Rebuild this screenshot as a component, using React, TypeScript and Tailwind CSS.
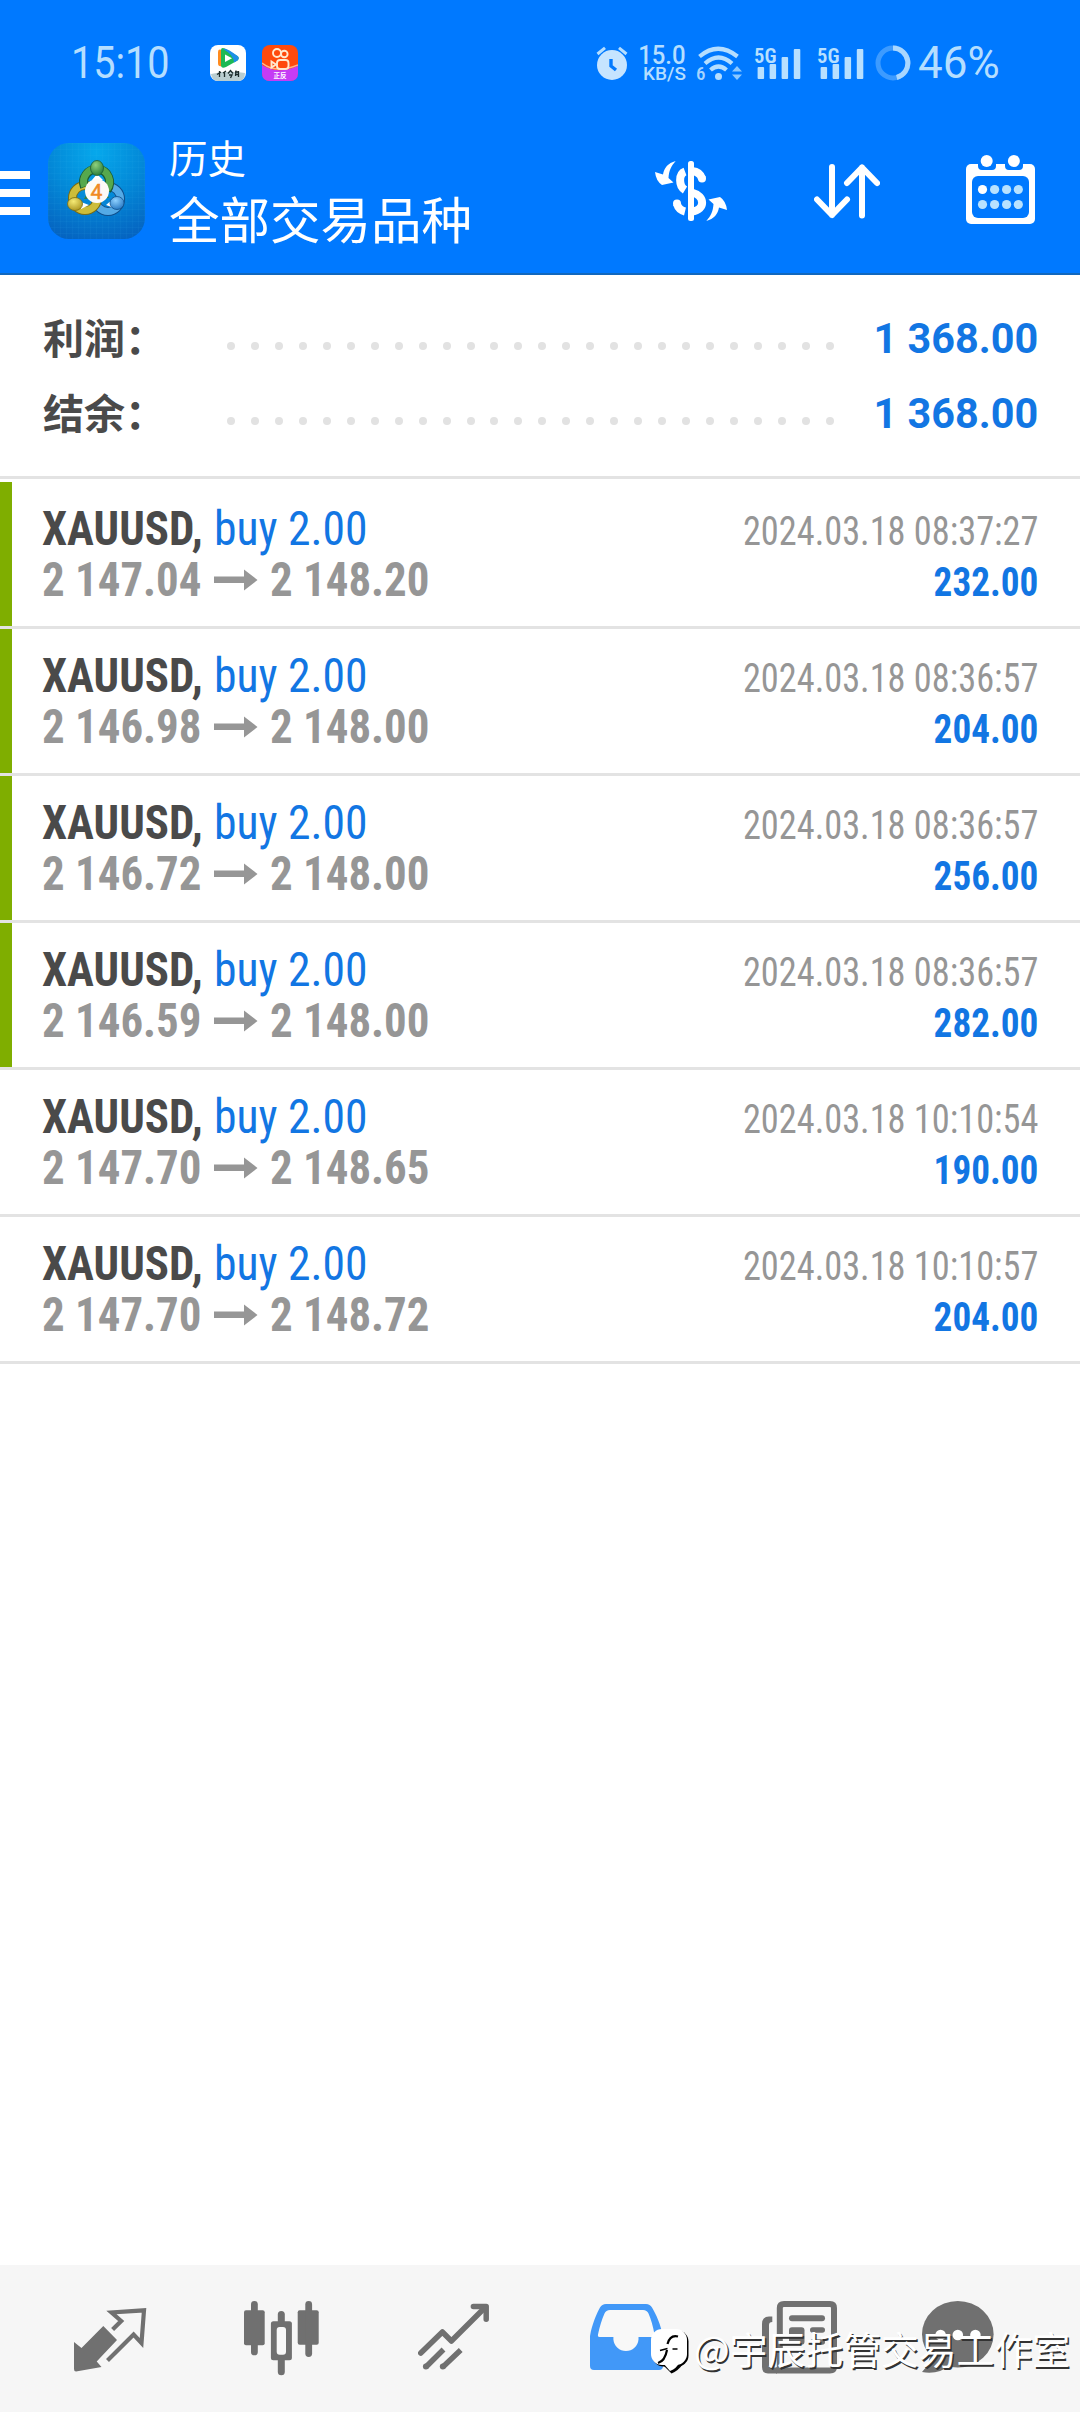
import type { ReactNode } from 'react';
import { cva } from 'class-variance-authority';
import clsx from 'clsx';

interface Deal {
  open: string;
  close: string;
  time: string;
  profit: string;
  marked: boolean;
}

const DEALS: Deal[] = [
  { open: '2 147.04', close: '2 148.20', time: '2024.03.18 08:37:27', profit: '232.00', marked: true },
  { open: '2 146.98', close: '2 148.00', time: '2024.03.18 08:36:57', profit: '204.00', marked: true },
  { open: '2 146.72', close: '2 148.00', time: '2024.03.18 08:36:57', profit: '256.00', marked: true },
  { open: '2 146.59', close: '2 148.00', time: '2024.03.18 08:36:57', profit: '282.00', marked: true },
  { open: '2 147.70', close: '2 148.65', time: '2024.03.18 10:10:54', profit: '190.00', marked: false },
  { open: '2 147.70', close: '2 148.72', time: '2024.03.18 10:10:57', profit: '204.00', marked: false },
];

const SUMMARY = [
  { label: '利润：', value: '1 368.00' },
  { label: '结余：', value: '1 368.00' },
];

const condensed = cva("block whitespace-nowrap font-['Roboto_Condensed',Roboto,sans-serif]", {
  variants: {
    fit: {
      left: 'origin-left scale-x-[0.935]',
      volume: 'origin-left scale-x-[0.95]',
      time: 'origin-right scale-x-[0.908]',
      profit: 'origin-right scale-x-[0.93]',
    },
  },
});

/* ---------- status bar ---------- */

function VideoAppIcon() {
  return (
    <svg width="36" height="36" viewBox="0 0 36 36">
      <rect width="36" height="36" rx="8" fill="#fff" />
      <path d="M1 29 Q18 25 35 28 Q35 36 28 36 H8 Q2 36 1 29Z" fill="#b9cdd0" />
      <path d="M8 7 Q8 3.500 12 5 V21 Q8 22 8 18Z" fill="#ff8a1e" />
      <path d="M11 5 Q11 2 15 3.500 L27.500 11 Q30 13 27.500 15.500 L16 22 Q11 24 11 20Z" fill="#1db954" />
      <path d="M13 4 Q16 2 27.500 11 Q30 13 27.500 15.500 L24 17.500 Q24 10 13 4Z" fill="#1c8fe8" />
      <path d="M15 9.500 L22 13.300 L15 17Z" fill="#fff" />
      <path
        d="M7 29.500 L11 27 M9.500 26 V32 M13 28 L16 26 M14.500 27 V32 M18 28.500 L20.500 25.500 L23 28.500 M19 30 H22 L20.500 33 M25 27 H29 M26 25.500 L25.500 31 M28.500 26 V32 M25 29.500 H29"
        stroke="#1b2b2b"
        strokeWidth="1.300"
        fill="none"
      />
    </svg>
  );
}

function CameraAppIcon() {
  return (
    <svg width="36" height="36" viewBox="0 0 36 36">
      <rect width="36" height="36" rx="8" fill="#ff4a0c" />
      <path d="M0 20 Q16 30 36 21 V28 Q36 36 28 36 H8 Q0 36 0 28Z" fill="#c53cf5" />
      <path d="M0 18 Q14 29 36 20" stroke="#ffb48a" strokeWidth="1.500" fill="none" />
      <g fill="none" stroke="#ffe9cf" strokeWidth="1.900">
        <circle cx="15" cy="8" r="4" />
        <circle cx="22.300" cy="9" r="3.300" />
        <rect x="15" y="15" width="11.500" height="9" rx="3" fill="#ff4a0c" />
        <path d="M9.500 16.500 L14 19.500 L9.500 22.500Z" />
      </g>
      <text x="18" y="33" textAnchor="middle" fontSize="6.500" fontWeight="700" fill="#fff" fontFamily="Noto Sans CJK SC">
        正反
      </text>
    </svg>
  );
}

function AlarmIcon() {
  return (
    <svg width="32" height="34" viewBox="0 0 32 34" fill="none">
      <path d="M1.500 8 L9 1.800 M30.500 8 L23 1.800" stroke="#b5deff" strokeWidth="3" />
      <circle cx="16" cy="19" r="15" fill="#c6e4ff" />
      <path d="M15 13 V20 L20 24" stroke="#0079ff" strokeWidth="3.400" />
    </svg>
  );
}

function WifiIcon() {
  return (
    <svg width="47" height="35" viewBox="0 0 47 35" fill="none" className="overflow-visible">
      <g stroke="#b5deff" strokeWidth="4.200">
        <path d="M3.500 10.500 Q22 -5 41.500 10.500" />
        <path d="M9 17.500 Q22.500 5.500 36 17.500" />
        <path d="M14.500 24 Q22.500 17 30.500 24" />
      </g>
      <circle cx="22.500" cy="30.500" r="3.500" fill="#b5deff" />
      <text x="0" y="33.500" fontSize="19" fontWeight="500" fill="#a5d4ff" fontFamily="Roboto Condensed">6</text>
      <path d="M36 25.500 L41 20 L46 25.500Z M36 28.500 L41 34 L46 28.500Z" fill="#8cc8ff" />
    </svg>
  );
}

function SignalIcon() {
  return (
    <svg width="48" height="33" viewBox="0 0 48 33" fill="#b8e0ff" className="overflow-visible">
      <text x="0" y="15.500" fontSize="20.500" fontWeight="600" textLength="22.500" lengthAdjust="spacingAndGlyphs" fontFamily="Roboto Condensed">5G</text>
      <rect x="3.600" y="20" width="6.500" height="12" rx="1" />
      <rect x="15.600" y="17" width="6.500" height="15" rx="1" />
      <rect x="27.600" y="10" width="6.500" height="22" rx="1" />
      <rect x="39.800" y="2" width="6.500" height="30" rx="1" />
    </svg>
  );
}

function BatteryRing() {
  return (
    <svg width="36" height="36" viewBox="0 0 36 36" fill="none" strokeWidth="5">
      <circle cx="18" cy="18" r="15" stroke="#3d9bff" />
      <path d="M18 3 A15 15 0 0 1 21.700 32.500" stroke="#a9d7ff" />
    </svg>
  );
}

function StatusBar() {
  return (
    <div className="flex h-[126px] items-center text-[#b5deff]">
      <div className="ml-[71px] w-[139px] font-['Roboto',sans-serif] text-[44px] leading-none font-[450]">
        <span className="block origin-left scale-x-[0.9] whitespace-nowrap">15:10</span>
      </div>
      <VideoAppIcon />
      <div className="ml-4">
        <CameraAppIcon />
      </div>
      <div className="ml-[298px] w-[43px]">
        <AlarmIcon />
      </div>
      <div className="flex w-[47px] flex-col items-end pt-[2px] font-['Roboto',sans-serif] font-medium">
        <span className="origin-right scale-x-[0.92] text-[26px] leading-[19px]">15.0</span>
        <span className="text-[19px] leading-[18px]">KB/S</span>
      </div>
      <div className="ml-[10px]">
        <WifiIcon />
      </div>
      <div className="ml-[11px] flex gap-[15px]">
        <SignalIcon />
        <SignalIcon />
      </div>
      <div className="ml-[10px]">
        <BatteryRing />
      </div>
      <div className="ml-[7px] font-['Roboto',sans-serif] text-[44px] leading-none font-[450]">
        <span className="block whitespace-nowrap">46%</span>
      </div>
    </div>
  );
}

/* ---------- title bar ---------- */

function MenuIcon() {
  return (
    <div className="flex w-[30px] flex-col gap-[10px]">
      <div className="h-2 bg-white" />
      <div className="h-2 bg-white" />
      <div className="h-2 bg-white" />
    </div>
  );
}

function AppLogo() {
  return (
    <svg width="97" height="96" viewBox="0 0 97 96">
      <defs>
        <radialGradient id="logoBg" cx="0.5" cy="0.1" r="0.95">
          <stop offset="0" stopColor="#06a8ec" />
          <stop offset="0.5" stopColor="#0389d8" />
          <stop offset="1" stopColor="#0563c0" />
        </radialGradient>
        <radialGradient id="green" cx="0.4" cy="0.3" r="0.8">
          <stop offset="0" stopColor="#8fd07c" />
          <stop offset="1" stopColor="#1d7434" />
        </radialGradient>
        <radialGradient id="yellow" cx="0.4" cy="0.3" r="0.8">
          <stop offset="0" stopColor="#f5ea75" />
          <stop offset="1" stopColor="#a68f1a" />
        </radialGradient>
        <radialGradient id="blue" cx="0.4" cy="0.3" r="0.8">
          <stop offset="0" stopColor="#8ed0ff" />
          <stop offset="1" stopColor="#1d70bd" />
        </radialGradient>
        <pattern id="grid" width="6" height="6" patternUnits="userSpaceOnUse">
          <path d="M6 0 H0 V6" fill="none" stroke="#3fc0f5" strokeOpacity="0.12" />
        </pattern>
      </defs>
      <rect width="97" height="96" rx="21" fill="url(#logoBg)" />
      <rect width="97" height="96" rx="21" fill="url(#grid)" />
      {/* three linked figures around the badge */}
      <path d="M49 31 L61 55 L36 56Z" fill="#2f7d4a" />
      <g fill="none">
        <circle cx="60" cy="56" r="12.500" stroke="#104f8c" strokeWidth="9" />
        <circle cx="60" cy="56" r="12.500" stroke="#54aae6" strokeWidth="7" />
        <circle cx="37" cy="55" r="12.500" stroke="#7a6c13" strokeWidth="9" />
        <circle cx="37" cy="55" r="12.500" stroke="#cdbd3a" strokeWidth="7" />
        <path d="M36.500 44 A13 13 0 1 1 59 47" stroke="#1b5c33" strokeWidth="9" />
        <path d="M36.500 43.500 A13 13 0 1 1 59 46.500" stroke="#56a84d" strokeWidth="7" />
      </g>
      <path d="M44 37 L49 31 L55 37Z M33 59 L41 62 L33 66Z M65 56 L58 62 L66 65Z" fill="#fff" />
      <ellipse cx="49" cy="25" rx="6.500" ry="7.500" fill="url(#green)" stroke="#1b5c33" strokeWidth="0.800" />
      <ellipse cx="27" cy="61" rx="7.500" ry="6.500" fill="url(#yellow)" stroke="#7a6c13" strokeWidth="0.800" />
      <ellipse cx="69" cy="60" rx="7" ry="6.500" fill="url(#blue)" stroke="#104f8c" strokeWidth="0.800" />
      <circle cx="49" cy="48" r="12" fill="#fdfaf6" />
      <text x="48.500" y="55.500" textAnchor="middle" fontSize="21" fill="#f08a24" stroke="#f08a24" strokeWidth="0.500" fontFamily="Roboto">4</text>
    </svg>
  );
}

function CurrencyIcon() {
  return (
    <svg width="72" height="60" viewBox="0 0 72 60" fill="none">
      <g stroke="#fff" strokeWidth="8">
        <path d="M30 10.500 C23.500 13 23.500 25 30 29" />
        <path d="M30 50.500 C26 49.500 23 46.500 22 43" />
        <path d="M37 10 C42 10.500 45.500 12.500 47 17.500" />
        <path d="M37 31.500 C50.500 35 50.500 49 37 50.500" />
      </g>
      <circle cx="22" cy="42.500" r="4" fill="#fff" />
      <circle cx="47" cy="17.500" r="4" fill="#fff" />
      <rect x="33" width="6" height="60" rx="2.500" fill="#fff" />
      <path d="M20.700 0 C13 2 9 7 8 13.500 L0 11 Q1 20 7 24 L18.500 21.500 L13.500 17 C14 10 16 5 20.700 0Z" fill="#fff" />
      <path d="M51.300 60 C59 58 63 53 64 46.500 L72 49 Q71 40 65 36 L53.500 38.500 L58.500 43 C58 50 56 55 51.300 60Z" fill="#fff" />
    </svg>
  );
}

function SortIcon() {
  return (
    <svg width="66" height="55" viewBox="0 0 66 55" fill="none" stroke="#fff" strokeWidth="6" strokeLinecap="round" strokeLinejoin="round">
      <path d="M18 3 V51 M3 35.500 L18 51 L33 35.500" />
      <path d="M48 51.500 V3.500 M33 19 L48 3.500 L63 19" />
    </svg>
  );
}

function CalendarIcon() {
  return (
    <svg width="69" height="69" viewBox="0 0 69 69">
      <rect y="9" width="69" height="60" rx="5" fill="#fff" />
      <path d="M12 8 V11 Q12 15 16 15 H26 Q30 15 30 11 V8Z M39 8 V11 Q39 15 43 15 H53 Q57 15 57 11 V8Z" fill="#0079ff" />
      <rect x="6" y="21" width="57" height="42" rx="6" fill="#0079ff" />
      <circle cx="20.700" cy="6" r="6" fill="#fff" />
      <circle cx="47.900" cy="6" r="6" fill="#fff" />
      {[34.5, 49.5].map((cy) =>
        [16.5, 28.6, 40.6, 52.3].map((cx) => (
          <circle key={`${cx}-${cy}`} cx={cx} cy={cy} r="4.600" fill={cx === 16.5 && cy === 34.5 ? '#fff' : '#b8e2ff'} />
        )),
      )}
    </svg>
  );
}

function TitleBar() {
  return (
    <div className="flex h-[147px] text-white">
      <div className="mt-[45px]">
        <MenuIcon />
      </div>
      <div className="mt-[17px] ml-[18px]">
        <AppLogo />
      </div>
      <div className="mt-[6px] ml-[24px] flex w-[486px] flex-col font-['Noto_Sans_CJK_SC',sans-serif] whitespace-nowrap">
        <span className="text-[38.5px] leading-[48px]">历史</span>
        <span className="mt-[3px] text-[50.5px] leading-[68px]">全部交易品种</span>
      </div>
      <div className="mt-[35px] w-[159px]">
        <CurrencyIcon />
      </div>
      <div className="mt-[38px] w-[152px]">
        <SortIcon />
      </div>
      <div className="mt-[29px]">
        <CalendarIcon />
      </div>
    </div>
  );
}

/* ---------- content ---------- */

function SummaryRow({ label, value }: { label: string; value: string }) {
  return (
    <div className="flex h-[75px] items-center">
      <span className="-mt-[4px] w-[184px] font-['Noto_Sans_CJK_SC',sans-serif] text-[41px] leading-none font-bold whitespace-nowrap text-[#4a4a4a]">
        {label}
      </span>
      <div className="mt-[14px] flex w-[607px] justify-between">
        {Array.from({ length: 26 }, (_, i) => (
          <span key={i} className="size-[8px] rounded-full bg-[#e2e2e2]" />
        ))}
      </div>
      <span className="ml-auto origin-right scale-x-[0.985] font-['Roboto',sans-serif] text-[42px] leading-none font-bold whitespace-nowrap text-[#1276e3]">
        {value}
      </span>
    </div>
  );
}

function PriceArrow() {
  return (
    <svg width="44" height="22" viewBox="0 0 44 22" fill="#969696">
      <path d="M0 7.500 H30 V0.500 L43.500 11 L30 21.500 V14 H0Z" />
    </svg>
  );
}

function DealRow({ deal }: { deal: Deal }) {
  return (
    <div className="flex h-[147px] border-b-[3px] border-[#e3e3e3]">
      <div className={clsx('w-3 shrink-0', deal.marked && 'bg-[#7fae00]')} />
      <div className="flex flex-1 justify-between pt-[21px] pr-[42px] pl-[30px]">
        <div className="text-[48px] leading-[51px]">
          <div className="flex">
            <span className={clsx(condensed({ fit: 'left' }), 'w-[172px] font-bold text-[#4a4a4a]')}>XAUUSD,</span>
            <span className={clsx(condensed({ fit: 'volume' }), 'text-[#1276e3]')}>buy 2.00</span>
          </div>
          <div className="flex items-center font-bold text-[#969696]">
            <span className={clsx(condensed({ fit: 'left' }), 'w-[172px]')}>{deal.open}</span>
            <PriceArrow />
            <span className={clsx(condensed({ fit: 'left' }), 'ml-[12px]')}>{deal.close}</span>
          </div>
        </div>
        <div className="pt-[3px] text-right text-[40px] leading-[51px]">
          <div className={clsx(condensed({ fit: 'time' }), 'text-[#969696]')}>{deal.time}</div>
          <div className={clsx(condensed({ fit: 'profit' }), 'font-bold text-[#1276e3]')}>{deal.profit}</div>
        </div>
      </div>
    </div>
  );
}

/* ---------- bottom navigation ---------- */

function QuotesIcon() {
  return (
    <svg width="73" height="65" viewBox="0 0 73 65" fill="none">
      <path d="M0 35 L7.500 41 L29.300 19 L43 33 L22.700 54.500 L27.500 60 L2 64.500 Q0 64.500 0 62Z" fill="#707070" />
      <path d="M38.600 22.500 L47.200 14 L37.500 5.500 L70 3.300 L67.500 36 L59.600 27.500 L33.500 53.500" stroke="#707070" strokeWidth="4.200" />
    </svg>
  );
}

function CandlesIcon() {
  return (
    <svg width="75" height="75" viewBox="0 0 75 75" fill="#707070">
      <rect y="9.300" width="20.700" height="35" rx="2" />
      <rect x="7" width="6.800" height="54.300" rx="3.400" />
      <rect x="53.700" y="9.300" width="21" height="34.500" rx="2" />
      <rect x="61.300" width="6.800" height="56" rx="3.400" />
      <rect x="33.800" y="10" width="7" height="64.300" rx="3.500" />
      <rect x="26.900" y="20.300" width="21" height="39" rx="2.500" />
      <rect x="32.700" y="26" width="9.300" height="27.700" rx="3" fill="#f8f8f8" />
    </svg>
  );
}

function TrendIcon() {
  return (
    <svg width="71" height="68" viewBox="0 0 71 68" fill="none" stroke="#707070" strokeWidth="5.500" strokeLinejoin="round">
      <path d="M2.800 50 L24.400 29 L33.400 38 L67 4.500" strokeLinecap="round" />
      <path d="M55.400 3.600 H68.200 V16.300" strokeLinecap="round" />
      <path d="M7.900 64 L25.500 46.500 M24.800 64 L42.700 47" />
      <g fill="#707070" stroke="none">
        <circle cx="7.900" cy="63.500" r="3" />
        <circle cx="24.800" cy="63.500" r="3" />
      </g>
    </svg>
  );
}

function TrayIcon() {
  return (
    <svg width="73" height="66" viewBox="0 0 73 66">
      <path d="M0 32 C2 20 7 9 10 3.500 Q12 0 16 0 H56 Q60 0 62 3.500 C66 10 71 21 73 33 V62 Q73 66 69 66 H4 Q0 66 0 62Z" fill="#4198f8" />
      <path d="M8 30.500 C9.500 23 12 15 14.500 9.500 Q16 6 20 6 H53 Q57 6 58.500 9.500 C61 15 63 22 64.500 30.500 Q65 33 62.500 33 H48.500 V35.500 A12.600 12.600 0 0 1 23.400 35.500 V33 H9.500 Q7.500 33 8 30.500Z" fill="#f8f8f8" />
    </svg>
  );
}

function NewsIcon() {
  return (
    <svg width="75" height="73" viewBox="0 0 75 73" fill="none">
      <path d="M10.300 15.500 V21 Q7 21 7 24 V64 Q7 66.500 10 66.500 H15 V72.500 H6 Q0 72.500 0 66 V23 Q0 15.500 7 15.500Z" fill="#707070" />
      <path d="M17.800 22 V66 Q17.800 69.500 14 69.500 H68 Q72 69.500 72 65.500 V7 Q72 3 68 3 H22 Q17.800 3 17.800 7Z" stroke="#707070" strokeWidth="6" />
      <g fill="#707070">
        <rect x="27" y="14.300" width="36" height="6" rx="3" />
        <rect x="27" y="26.300" width="15.500" height="17.500" rx="3" />
        <rect x="48" y="26.300" width="15" height="5.500" rx="2.700" />
        <rect x="48" y="38.300" width="15" height="5.500" rx="2.700" />
      </g>
    </svg>
  );
}

function ChatIcon() {
  return (
    <svg width="72" height="73" viewBox="0 0 72 73">
      <ellipse cx="35.800" cy="33.300" rx="35.800" ry="33.300" fill="#707070" />
      <path d="M8 50 Q9 62 0 71 Q16 74 29 64Z" fill="#707070" />
      <g fill="#fff">
        <circle cx="18.600" cy="34" r="5.300" />
        <circle cx="35.800" cy="34" r="5.300" />
        <circle cx="53.400" cy="34" r="5.300" />
      </g>
    </svg>
  );
}

const NAV: { label: string; icon: ReactNode; className: string }[] = [
  { label: '行情', icon: <QuotesIcon />, className: 'w-[170px] pt-[42px]' },
  { label: '图表', icon: <CandlesIcon />, className: 'w-[174px] pt-[36px]' },
  { label: '交易', icon: <TrendIcon />, className: 'w-[172px] pt-[38px]' },
  { label: '历史', icon: <TrayIcon />, className: 'w-[172px] pt-[39px]' },
  { label: '新闻', icon: <NewsIcon />, className: 'w-[160px] pt-[36px]' },
  { label: '信息', icon: <ChatIcon />, className: 'pt-[36px]' },
];

function Watermark() {
  return (
    <div className="absolute right-[10px] bottom-[37px] flex items-center text-white">
      <svg width="39" height="46" viewBox="0 0 39 46" className="mt-[8px]">
        <g fill="#000" transform="translate(1.500 1.500)">
          <rect width="36" height="36" rx="11" />
          <path d="M10 34 H30 Q26 40 19 43Z" />
        </g>
        <rect width="36" height="36" rx="11" fill="#fff" />
        <path d="M12 34 H28 Q26 39 19 42Z" fill="#fff" />
        {/* leaf-shaped letter mark */}
        <path d="M27 7.500 Q19 5.500 16.500 15 M16 21 Q14 32 7 34" fill="none" stroke="#000" strokeWidth="2.200" />
        <path d="M9 21.500 L16.500 19.500 M21.500 20 H26.500" stroke="#000" strokeWidth="1.600" />
      </svg>
      <span className="ml-[4px] font-['Noto_Sans_CJK_SC',sans-serif] text-[37.8px] leading-[50px] whitespace-nowrap [text-shadow:1.5px_1.5px_0.5px_#333]">
        @宇辰托管交易工作室
      </span>
    </div>
  );
}

export default function App() {
  return (
    <div className="flex h-[2412px] w-[1080px] flex-col overflow-hidden bg-white">
      <header className="h-[275px] shrink-0 border-b-2 border-[#1268bd] bg-[#0079ff]">
        <StatusBar />
        <TitleBar />
      </header>

      <section className="h-[204px] shrink-0 border-b-[3px] border-[#e3e3e3] pt-[26px] pr-[42px] pl-[43px]">
        {SUMMARY.map((row) => (
          <SummaryRow key={row.label} {...row} />
        ))}
      </section>

      <main className="flex-1 pt-[3px]">
        {DEALS.map((deal, i) => (
          <DealRow key={i} deal={deal} />
        ))}
      </main>

      <nav className="relative flex h-[147px] shrink-0 bg-[#f6f6f6] pl-[74px]">
        {NAV.map(({ label, icon, className }) => (
          <button key={label} aria-label={label} className={clsx('flex items-start', className)}>
            {icon}
          </button>
        ))}
        <Watermark />
      </nav>
    </div>
  );
}
